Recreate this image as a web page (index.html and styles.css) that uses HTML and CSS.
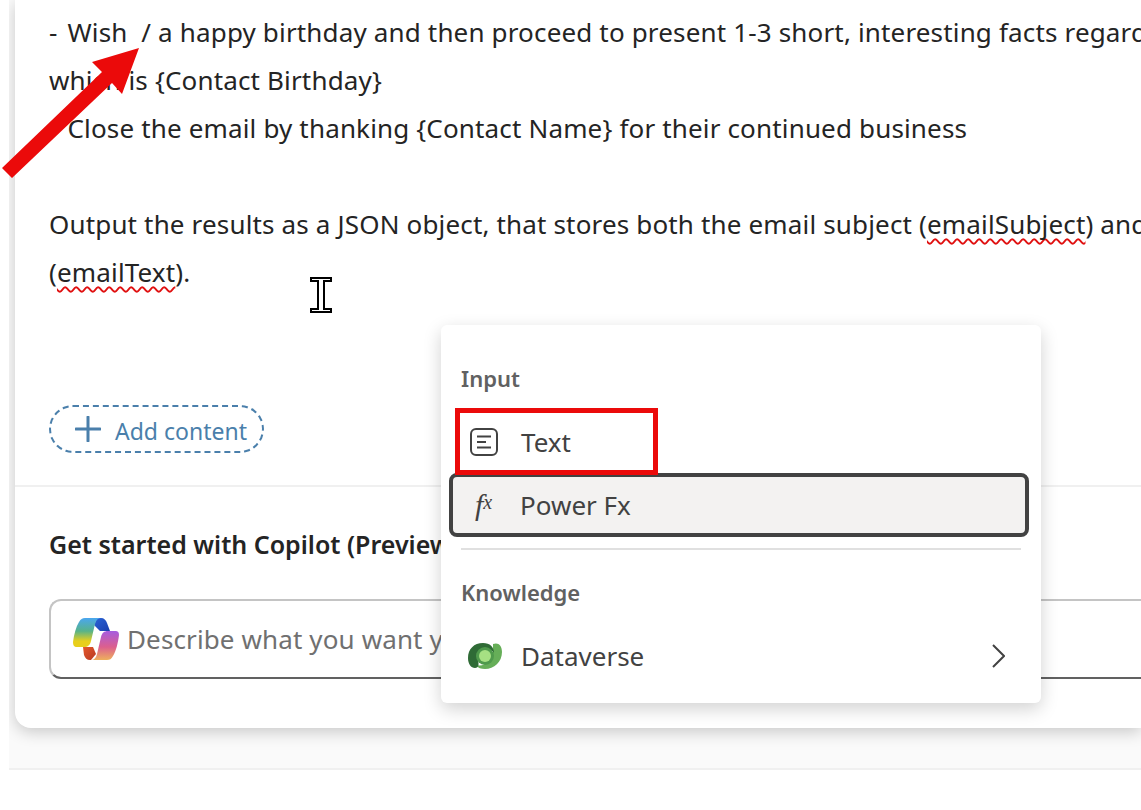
FILE: index.html
```html
<!DOCTYPE html>
<html lang="en">
<head>
  <meta charset="UTF-8" />
  <title>Prompt editor</title>
  <link rel="stylesheet" href="styles.css">
</head>
<body>
  <div class="page">
    <div class="card">
      <div class="prompt">
        <p class="line"><span class="dash">-</span> Wish &nbsp;/ a happy birthday and then proceed to present 1-3 short, interesting facts regarding</p>
        <p class="line">which is {Contact Birthday}</p>
        <p class="line"><span class="dash">-</span> Close the email by thanking {Contact Name} for their continued business</p>
        <p class="line">&nbsp;</p>
        <p class="line">Output the results as a JSON object, that stores both the email subject (<span class="typo">emailSubject</span>) and</p>
        <p class="line">(<span class="typo">emailText</span>).</p>
      </div>
      <button class="add-btn" type="button">
        <svg class="add-icon" viewBox="0 0 26 26"><path d="M13 1v24M1 13h24" /></svg>
        <span class="add-label">Add content</span>
      </button>
      <div class="copilot">
        <h3>Get started with Copilot (Preview)</h3>
        <div class="ask">
          <svg class="copilot-logo" viewBox="0 0 46 42">
            <defs>
              <linearGradient id="cpA" x1="0" y1="0" x2="0" y2="1">
                <stop offset="0" stop-color="#4aa6f0" />
                <stop offset="0.45" stop-color="#57b38a" />
                <stop offset="0.8" stop-color="#e8cf1c" />
              </linearGradient>
              <linearGradient id="cpB" x1="0" y1="0" x2="0" y2="1">
                <stop offset="0" stop-color="#a65de0" />
                <stop offset="0.55" stop-color="#dc5f8e" />
                <stop offset="1" stop-color="#eeb05c" />
              </linearGradient>
              <linearGradient id="cpC" x1="0" y1="0" x2="1" y2="1">
                <stop offset="0" stop-color="#2a63d6" />
                <stop offset="1" stop-color="#1b3fae" />
              </linearGradient>
              <linearGradient id="cpD" x1="0" y1="0" x2="1" y2="1">
                <stop offset="0" stop-color="#e4572a" />
                <stop offset="1" stop-color="#b83a24" />
              </linearGradient>
            </defs>
            <path fill="url(#cpC)" d="M24 0h4c3 0 5 2 6 5l3 8H27l-6-6z" />
            <path fill="url(#cpD)" d="M10 29h10l3 7-5 6h-1c-3 0-5-2-6-5z" />
            <path fill="url(#cpA)" d="M12 0h16c-3 0-5 2-6 6l-4 17c-1 4-3 6-7 6H4c-3 0-4-2-4-5 1-8 3-15 6-20 2-3 3-4 6-4z" />
            <path fill="url(#cpB)" d="M34 42H18c3 0 5-2 6-6l4-17c1-4 3-6 7-6h7c3 0 4 1 4 4-1 8-3 16-6 21-2 3-3 4-6 4z" />
          </svg>
          <span class="placeholder">Describe what you want your</span>
        </div>
      </div>
    </div>

    <div class="menu">
      <div class="menu-label">Input</div>
      <div class="menu-item">
        <svg class="item-icon" viewBox="0 0 28 28"><rect x="1" y="1" width="26" height="26" rx="5" /><path d="M7 8.5h14M7 14h9M7 19.5h14" /></svg>
        Text
      </div>
      <div class="menu-item active">
        <span class="fx">f<span class="fx-x">x</span></span>
        Power Fx
      </div>
      <div class="menu-sep"></div>
      <div class="menu-label">Knowledge</div>
      <div class="menu-item dv">
        <svg class="dv-icon" viewBox="0 0 34 26">
          <path fill="#66ae58" d="M25 1c5-2 9 1 9 8 0 10-8 17-17 17-4 0-7-1-9-4 8 2 16-3 17-12 0-4 0-7 0-9z" />
          <path fill="#2f6b36" d="M15 0C6 0 0 6 0 15c0 6 3 10 7 10 4 0 4-4 3-8-1-6 3-10 9-10 4 0 6 1 7 3 0-6-4-10-11-10z" />
          <circle cx="17" cy="13" r="9" fill="#4f9a4c" />
          <circle cx="17" cy="13" r="6" fill="#a6e083" />
        </svg>
        Dataverse
        <svg class="chevron" viewBox="0 0 14 24"><path d="M2 1l11 11L2 23" /></svg>
      </div>
    </div>

    <div class="callout-box"></div>
    <svg class="ibeam" viewBox="0 0 22 36"><path d="M1 1h20v3h-7v28h7v3H1v-3h7V4H1z" /></svg>
  </div>
  <svg class="arrow" viewBox="0 0 142 182"><polygon points="2,168 102,72 92,62 139,48 122,94 112,83 12,178" /></svg>
</body>
</html>
```

FILE: styles.css
```css
* {
  box-sizing: border-box;
}

body {
  margin: 0;
  height: 810px;
  overflow: hidden;
  background: #fff;
  font-family: "Noto Sans", "Open Sans", sans-serif;
  color: #242424;
}

.page {
  position: relative;
  height: 770px;
  margin-left: 9px;
  padding-left: 6px;
  overflow: hidden;
  background: #fafafa;
  border-bottom: 2px solid #f0f0f0;
}

.card {
  height: 728px;
  padding: 8px 0 0 34px;
  background: #fff;
  border-radius: 0 0 0 16px;
  box-shadow: 0 4px 16px rgba(0, 0, 0, 0.2);
}

.prompt {
  height: 288px;
}

.line {
  margin: 0;
  font-size: 26px;
  letter-spacing: 0.16px;
  line-height: 48px;
  white-space: nowrap;
}

.dash {
  margin-right: 3px;
}

.typo {
  text-decoration: underline wavy #e01010 2px;
  text-decoration-skip-ink: none;
  text-underline-offset: 4px;
}

.add-btn {
  display: flex;
  align-items: center;
  gap: 14px;
  width: 215px;
  height: 48px;
  margin-top: 109px;
  padding: 0 0 0 24px;
  border: 2px dashed #4a7fab;
  border-radius: 24px;
  background: #fff;
  color: #4a7fab;
  font-family: inherit;
  font-size: 23px;
}

.add-label {
  padding-top: 3px;
}

.add-icon {
  width: 26px;
  height: 26px;
  fill: none;
  stroke: #4a7fab;
  stroke-width: 3;
  stroke-linecap: round;
}

.copilot {
  margin: 32px 0 0 -34px;
  padding: 37px 0 0 34px;
  border-top: 2px solid #f0f0f0;
}

.copilot h3 {
  margin: 0;
  font-size: 25px;
  font-weight: 600;
  line-height: 40px;
  white-space: nowrap;
}

.ask {
  display: flex;
  align-items: center;
  gap: 8px;
  height: 80px;
  margin-top: 35px;
  padding-left: 22px;
  border: 2px solid #c4c4c4;
  border-bottom-color: #616161;
  border-right: 0;
  border-radius: 12px 0 0 12px;
}

.copilot-logo {
  width: 46px;
  height: 42px;
}

.placeholder {
  font-size: 26px;
  letter-spacing: 0.12px;
  color: #707070;
  white-space: nowrap;
}

.menu {
  position: absolute;
  left: 432px;
  top: 325px;
  width: 600px;
  height: 378px;
  padding: 35px 12px 0 8px;
  background: #fff;
  border-radius: 6px;
  box-shadow: 0 6px 18px rgba(0, 0, 0, 0.18);
}

.menu-label {
  height: 36px;
  padding-left: 12px;
  font-size: 22px;
  font-weight: 600;
  line-height: 36px;
  color: #616161;
}

.menu-item {
  display: flex;
  align-items: center;
  height: 50px;
  padding: 0 21px;
  font-size: 26px;
  color: #424242;
}

.menu-label + .menu-item {
  margin-top: 21px;
  margin-bottom: 6px;
}

.menu-item.active {
  height: 64px;
  margin-bottom: 11px;
  background: #f3f2f1;
  border: 4px solid #424242;
  border-radius: 8px;
  padding: 0 17px;
}

.item-icon {
  width: 28px;
  height: 28px;
  margin-right: 23px;
  fill: none;
  stroke: #424242;
  stroke-width: 2;
}

.fx {
  width: 50px;
  padding-left: 5px;
  font-family: "Liberation Serif", serif;
  font-style: italic;
  font-size: 30px;
  line-height: 1;
}

.fx-x {
  position: relative;
  top: -6px;
  font-size: 20px;
}

.menu-sep {
  height: 2px;
  margin: 0 8px 24px 12px;
  background: #e0e0e0;
}

.menu-item.dv {
  padding-left: 19px;
}

.dv-icon {
  width: 34px;
  height: 26px;
  margin-right: 19px;
}

.chevron {
  width: 14px;
  height: 24px;
  margin-left: auto;
  margin-right: 3px;
  fill: none;
  stroke: #424242;
  stroke-width: 2;
}

.callout-box {
  position: absolute;
  left: 446px;
  top: 408px;
  width: 203px;
  height: 67px;
  border: 5px solid #eb0a0a;
}

.arrow {
  position: absolute;
  left: 0;
  top: 0;
  width: 142px;
  height: 182px;
  fill: #eb0a0a;
}

.ibeam {
  position: absolute;
  left: 301px;
  top: 277px;
  width: 22px;
  height: 36px;
  fill: #fff;
  stroke: #000;
  stroke-width: 2;
}
```
